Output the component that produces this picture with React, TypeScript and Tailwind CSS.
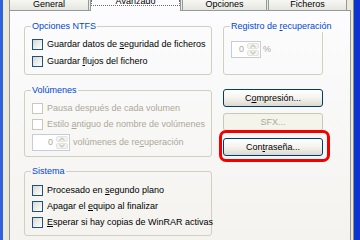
import { ReactNode } from "react"

// "&x" marks the accelerator letter, drawn underlined like in a Windows dialog
const acc = (s: string) => {
  const i = s.indexOf("&")
  if (i < 0) return s
  return (
    <>
      {s.slice(0, i)}
      <span className="underline underline-offset-[1px]">{s[i + 1]}</span>
      {s.slice(i + 2)}
    </>
  )
}

const Group = ({ title, bg, className, children }: { title: string; bg: string; className: string; children: ReactNode }) => (
  <div className={`relative rounded-[3px] border border-[#d0d0bf] ${className}`}>
    <span className={`absolute left-[6px] -top-[6px] px-[1px] leading-[11px] text-[#0046d5] whitespace-nowrap ${bg}`}>{acc(title)}</span>
    {children}
  </div>
)

const Check = ({ label, disabled, h = "h-[16px]" }: { label: string; disabled?: boolean; h?: string }) => (
  <div className={`flex items-center ${h}`}>
    <span
      className={`w-[11px] h-[11px] shrink-0 border ${
        disabled ? "border-[#cac8bb] bg-white" : "border-[#1c5180] bg-linear-to-br from-[#d8d8d2] to-white"
      }`}
    />
    <span className={`ml-[4px] whitespace-nowrap leading-[11px] ${disabled ? "text-[#aca899]" : "text-black"}`}>{acc(label)}</span>
  </div>
)

const Spin = ({ w }: { w: string }) => (
  <div className={`flex h-[17px] ${w} border border-[#c3cddb] bg-white p-[1px]`}>
    <span className="flex-1 text-right pr-[3px] leading-[13px] text-[#aca899]">0</span>
    <span className="w-[12px] flex flex-col gap-px">
      {[0, 1].map((k) => (
        <span key={k} className="flex-1 flex items-center justify-center rounded-[2px] bg-[#f3f3ef] border border-[#e4e3dc]">
          <svg width="6" height="4" viewBox="0 0 6 4">
            <polyline points={k ? "0.5,0.5 3,3 5.5,0.5" : "0.5,3.5 3,1 5.5,3.5"} fill="none" stroke="#c8c7bd" strokeWidth="1.2" />
          </svg>
        </span>
      ))}
    </span>
  </div>
)

const Btn = ({ label, disabled }: { label: string; disabled?: boolean }) => (
  <div
    className={`h-[18px] w-[100px] flex items-center justify-center rounded-[3px] border leading-[11px] ${
      disabled
        ? "border-[#c9c7ba] bg-[#f5f4ea] text-[#aca899]"
        : "border-[#003c74] bg-linear-to-b from-white via-[#f4f3ee] to-[#dcd9cf] text-black"
    }`}
  >
    {acc(label)}
  </div>
)

const Tab = ({ label, w, active }: { label: string; w: string; active?: boolean }) =>
  active ? (
    <div className={`relative z-10 h-[11px] ${w} flex justify-center border-x border-[#919b9c] bg-[#fcfcfe]`}>
      <span className="-mt-[3px] leading-[9px] text-black">{label}</span>
      <span className="absolute left-0 right-0 top-0 h-[6px] border-x border-b border-dotted border-[#6b6b6b]" />
    </div>
  ) : (
    <div className={`h-[10px] ${w} flex justify-center border-x border-[#919b9c] bg-linear-to-b from-[#f7f7f3] to-[#e6e5df]`}>
      <span className="leading-[9px] text-black">{label}</span>
    </div>
  )

export default function App() {
  return (
    <div className="w-[360px] h-[240px] flex overflow-hidden bg-[#ece9d8] font-['Liberation_Sans',Arial,sans-serif] text-[9px]">
      <div className="w-[3px] bg-[#2f62dc]" />
      <div className="w-[6px]" />

      <div className="w-[342px] flex flex-col">
        <div className="h-[10px] flex items-start gap-px">
          <Tab label="General" w="w-[80px]" />
          <Tab label="Avanzado" w="w-[91px]" active />
          <Tab label="Opciones" w="w-[85px]" />
          <Tab label="Ficheros" w="w-[79px]" />
        </div>

        <div className="flex-1 border-x border-t border-[#919b9c] bg-linear-to-b from-[#fcfcfe] to-[#f4f3ef] pl-[14px] pt-[15px]">
          <div className="flex gap-[11px]">
            <div className="w-[188px] flex flex-col">
              <Group title="Opciones NTFS" bg="bg-[#fcfcfd]" className="pt-[9px] pb-[4px] pl-[7px]">
                <Check label="Guardar datos de &seguridad de ficheros" h="h-[17px]" />
                <Check label="Guardar &flujos del fichero" h="h-[17px]" />
              </Group>

              <Group title="Volúmenes" bg="bg-[#f9f9f8]" className="mt-[15px] pt-[9px] pb-[5px] pl-[7px]">
                <Check label="Pausa después de cada volumen" disabled />
                <Check label="Estilo &antiguo de nombre de volúmenes" disabled />
                <div className="mt-[2px] flex items-center">
                  <Spin w="w-[38px]" />
                  <span className="ml-[3px] text-[#aca899] whitespace-nowrap">{acc("volúmenes de re&cuperación")}</span>
                </div>
              </Group>

              <Group title="Sistema" bg="bg-[#f7f6f3]" className="mt-[14px] pt-[10px] pb-[5px] pl-[7px]">
                <Check label="Procesado en &segundo plano" />
                <Check label="Apagar el &equipo al finalizar" />
                <Check label="&Esperar si hay copias de WinRAR activas" />
              </Group>
            </div>

            <div className="w-[100px] flex flex-col">
              <Group title="Registro de &recuperación" bg="bg-[#fcfcfd]" className="h-[49px] pt-[14px] pl-[7px]">
                <div className="flex items-center">
                  <Spin w="w-[30px]" />
                  <span className="ml-[2px] text-[#aca899]">%</span>
                </div>
              </Group>

              <div className="mt-[14px] flex flex-col">
                <Btn label="C&ompresión..." />
                <div className="mt-[6px]">
                  <Btn label="SFX..." disabled />
                </div>
                <div className="relative mt-[7px]">
                  <Btn label="Con&traseña..." />
                  <span className="absolute -left-[4px] -right-[7px] -top-[8px] -bottom-[6px] rounded-[7px] border-[3px] border-[#f20000] pointer-events-none" />
                </div>
              </div>
            </div>
          </div>
        </div>
      </div>

      <div className="w-[2px]" />
      <div className="w-[1px] bg-[#8e8c80]" />
      <div className="flex-1 bg-[#0c35cf]" />
    </div>
  )
}
